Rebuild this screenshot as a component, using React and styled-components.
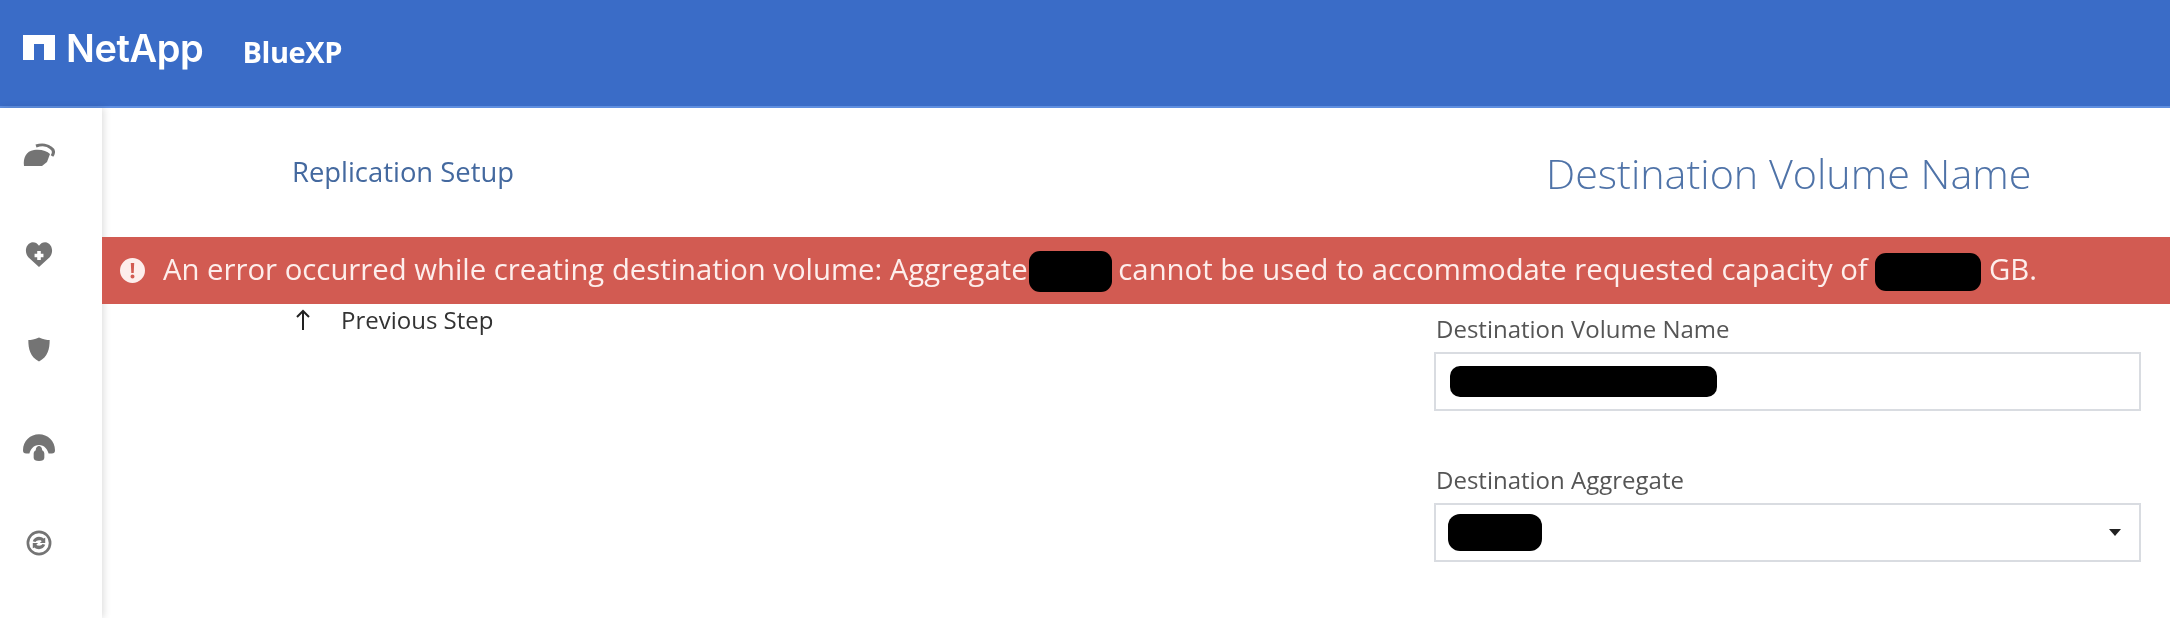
import React from 'react';
import styled, { createGlobalStyle } from 'styled-components';

const GlobalStyle = createGlobalStyle`
  html, body {
    margin: 0;
    background: #ffffff;
    font-family: "Open Sans", "Liberation Sans", sans-serif;
  }
`;

const Page = styled.div`
  width: 2170px;
  height: 618px;
  overflow: hidden;
  filter: blur(0.7px);
`;

const Header = styled.header`
  height: 106px;
  background-color: #3a6cc7;
  border-bottom: 2px solid #5f8fe0;
  display: flex;
  align-items: center;
  padding-left: 23px;
`;

const Logo = styled.div`
  display: flex;
  align-items: center;
  gap: 11px;
  color: #ffffff;
  font-family: "Inter", "Open Sans", sans-serif;
  font-size: 38px;
  font-weight: 600;
  letter-spacing: -0.4px;
  margin-top: -11px;
`;

const Product = styled.span`
  margin-left: 39px;
  margin-top: -4px;
  color: #ffffff;
  font-size: 29px;
  font-weight: 700;
  letter-spacing: -0.4px;
`;

const Body = styled.div`
  display: flex;
  height: 510px;
`;

const Sidebar = styled.nav`
  flex: 0 0 102px;
  box-sizing: border-box;
  padding: 31px 24px 0 0;
  display: flex;
  flex-direction: column;
  align-items: center;
  gap: 65px;
  box-shadow: 2px 0 7px rgba(0, 0, 0, 0.13);
`;

const NavIcon = styled.svg`
  width: 32px;
  height: 32px;
  fill: #747474;
  flex: none;
`;

const Main = styled.main`
  flex: 1;
  min-width: 0;
`;

const TitleRow = styled.div`
  height: 129px;
  display: grid;
  grid-template-columns: 1254px 1fr;
  align-items: center;
  padding-left: 190px;
`;

const StepName = styled.div`
  color: #44699f;
  font-size: 27.4px;
  margin-top: -2px;
`;

const PageTitle = styled.h1`
  margin: 0;
  color: #4f73a8;
  font-size: 41.3px;
  font-weight: 300;
  white-space: nowrap;
`;

const ErrorBanner = styled.div`
  height: 67px;
  background-color: #d25b52;
  color: #fdeeec;
  display: flex;
  align-items: center;
  gap: 18px;
  padding-left: 18px;
  font-size: 29.3px;
  white-space: nowrap;
`;

const Redacted = styled.span`
  display: inline-block;
  background: #000000;
  border-radius: ${(p) => p.$radius || 10}px;
  width: ${(p) => p.$w}px;
  height: ${(p) => p.$h}px;
  vertical-align: middle;
  margin: 0 ${(p) => p.$mr || 0}px 0 ${(p) => p.$ml || 0}px;
`;

const Content = styled.div`
  display: grid;
  grid-template-columns: 1142px 707px;
  padding-left: 190px;
`;

const BackLink = styled.div`
  display: flex;
  align-items: center;
  gap: 30px;
  height: 31px;
  padding-left: 3px;
  color: #333333;
  font-size: 24px;
`;

const Form = styled.div`
  display: flex;
  flex-direction: column;
  gap: 53px;
  padding-top: 9px;
`;

const Field = styled.div`
  display: flex;
  flex-direction: column;
  gap: 7px;
`;

const Label = styled.label`
  color: #555555;
  font-size: 24px;
  line-height: 32px;
  padding-left: 2px;
`;

const InputBox = styled.div`
  box-sizing: border-box;
  height: 59px;
  border: 2px solid #d9dce1;
  display: flex;
  align-items: center;
  justify-content: space-between;
  padding: 0 18px 0 ${(p) => p.$pad || 14}px;
`;

const Caret = styled.span`
  width: 0;
  height: 0;
  border-left: 6px solid transparent;
  border-right: 6px solid transparent;
  border-top: 7px solid #222222;
`;

const App = () => (
  <Page>
    <GlobalStyle />
    <Header>
      <Logo>
        <svg width="32" height="25" viewBox="0 0 32 25">
          <path fill="#fff" d="M0 0h32v25H21V9H11v16H0z" />
        </svg>
        NetApp
      </Logo>
      <Product>BlueXP</Product>
    </Header>
    <Body>
      <Sidebar>
        <NavIcon viewBox="0 0 32 32">
          <path d="M1 27c-1-8 2-15 10-16 7-1 13 1 16 4l-3 8-5 4z" />
          <path d="M13 7c6-2 12-1 15 2 3 2 3 5 1 8" fill="none" stroke="#747474" strokeWidth="3" />
        </NavIcon>
        <NavIcon viewBox="0 -2 36 36">
          <path fillRule="evenodd" d="M18 33 6 22C1 16 3 6 11 5c3 0 5 1 7 4 2-3 4-4 7-4 8 1 10 11 5 17zM16 15v3h-3v4h3v3h4v-3h3v-4h-3v-3z" />
        </NavIcon>
        <NavIcon viewBox="0 0 36 36">
          <path d="M18 5c5 2 9 3 12 3 0 10-2 19-12 24C8 27 6 18 6 8c3 0 7-1 12-3z" />
        </NavIcon>
        <NavIcon viewBox="3 2 30 30">
          <path d="M3 21C3 12 10 6 18 6s15 6 15 15c0 2-1 3-3 3h-3c-1-4-4-8-9-8s-8 4-9 8H6c-2 0-3-1-3-3z" />
          <path d="M13 24c0-2 2-3 2-3 0-3 2-4 3-4s3 1 3 4c0 0 2 1 2 3v4c0 2-2 3-5 3s-5-1-5-3z" />
        </NavIcon>
        <NavIcon viewBox="0 0 36 36">
          <path fillRule="evenodd" d="M18 4a14 14 0 1 1 0 28 14 14 0 0 1 0-28zm0 3a11 11 0 1 0 0 22 11 11 0 0 0 0-22z" />
          <path d="M11 16c1-3 4-5 7-5 2 0 4 1 5 2l2-1v6h-6l2-2c-1-1-2-1-3-1-2 0-3 1-4 2zM25 20c-1 3-4 5-7 5-2 0-4-1-5-2l-2 1v-6h6l-2 2c1 1 2 1 3 1 2 0 3-1 4-2z" />
        </NavIcon>
      </Sidebar>
      <Main>
        <TitleRow>
          <StepName>Replication Setup</StepName>
          <PageTitle>Destination Volume Name</PageTitle>
        </TitleRow>
        <ErrorBanner>
          <svg width="25" height="25" viewBox="0 0 25 25">
            <path fill="#fdeeec" fillRule="evenodd" d="M12.5 0a12.5 12.5 0 1 1 0 25 12.5 12.5 0 0 1 0-25zM10.8 5l.5 10h2.4l.5-10zM12.5 16.5a2 2 0 1 0 0 4 2 2 0 0 0 0-4z" />
          </svg>
          <span>
            An error occurred while creating destination volume: Aggregate
            <Redacted $w={83} $h={41} $radius={11} $ml={1} $mr={-1} />
            {' '}cannot be used to accommodate requested capacity of{' '}
            <Redacted $w={106} $h={38} $radius={11} />
            {' '}GB.
          </span>
        </ErrorBanner>
        <Content>
          <BackLink>
            <svg width="16" height="22" viewBox="0 0 16 22">
              <path d="M8 21V2M2 8l6-6 6 6" fill="none" stroke="#222" strokeWidth="2" />
            </svg>
            Previous Step
          </BackLink>
          <Form>
            <Field>
              <Label>Destination Volume Name</Label>
              <InputBox>
                <Redacted $w={267} $h={31} $radius={10} />
              </InputBox>
            </Field>
            <Field>
              <Label>Destination Aggregate</Label>
              <InputBox $pad={12}>
                <Redacted $w={94} $h={37} $radius={12} />
                <Caret />
              </InputBox>
            </Field>
          </Form>
        </Content>
      </Main>
    </Body>
  </Page>
);

export default App;
